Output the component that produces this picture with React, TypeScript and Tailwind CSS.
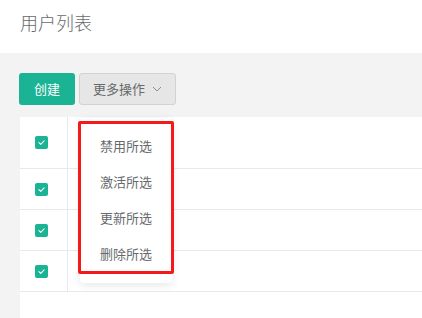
const rows = [
  { height: 'h-[52px]' },
  { height: 'h-[41px]' },
  { height: 'h-[41px]' },
  { height: 'h-[41px]' },
];

const actions = ['禁用所选', '激活所选', '更新所选', '删除所选'];

function CheckBox() {
  return (
    <span className="flex h-[13px] w-[13px] items-center justify-center rounded-[2px] bg-[#1ab394]">
      <svg viewBox="0 0 12 12" className="h-[9px] w-[9px]" fill="none">
        <path d="M2.5 6.2 5 8.5 9.5 3.8" stroke="white" strokeWidth="1.4" strokeLinecap="round" strokeLinejoin="round" />
      </svg>
    </span>
  );
}

export default function App() {
  return (
    <div
      className="flex h-[318px] w-[422px] flex-col overflow-hidden bg-white"
      style={{ fontFamily: '"Noto Sans CJK SC", "Noto Sans", sans-serif' }}
    >
      <header className="h-[53px] shrink-0 bg-white pl-[20px] pt-[9px]">
        <h1 className="text-[18px] leading-[26px] font-light text-[#676a6c]">用户列表</h1>
      </header>

      <main className="flex flex-1 flex-col bg-[#f3f3f4] pl-[19px] pt-[20px]">
        <div className="flex gap-[4px]">
          <button className="h-8 w-[56px] rounded-[3px] bg-[#1ab394] text-[13px] text-white">
            创建
          </button>
          <div className="relative">
            <button className="flex h-8 w-[97px] items-center justify-center gap-[7px] rounded-[3px] border border-[#d2d2d2] bg-[#e6e6e6] text-[13px] text-[#676a6c]">
              更多操作
              <svg viewBox="0 0 10 6" className="h-[6px] w-[10px]" fill="none">
                <path d="M1 1 5 5 9 1" stroke="#8a8c8e" strokeWidth="1" />
              </svg>
            </button>

            <div className="absolute left-px top-[45px] z-10 h-[165px] w-[92px] rounded-[4px] bg-white pt-[10px] shadow-[0_2px_8px_rgba(0,0,0,0.1)]">
              {actions.map((label) => (
                <div key={label} className="flex h-9 items-center pl-5 text-[13px] text-[#676a6c]">
                  {label}
                </div>
              ))}
              <div className="pointer-events-none absolute -left-[2px] top-[3px] h-[153px] w-[96px] rounded-[2px] border-[3px] border-[#f5191a]" />
            </div>
          </div>
        </div>

        <div className="mt-[12px] ml-px flex-1 bg-white">
          {rows.map((row, i) => (
            <div key={i} className={`flex ${row.height} border-b border-[#e7eaec]`}>
              <div className="flex w-[48px] items-center border-r border-[#e7eaec] pl-[15px]">
                <CheckBox />
              </div>
            </div>
          ))}
        </div>
      </main>
    </div>
  );
}
